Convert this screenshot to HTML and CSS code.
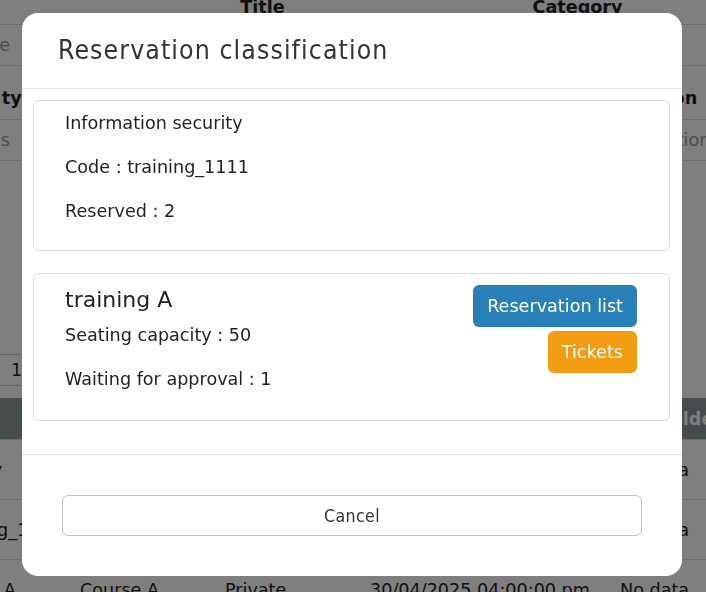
FILE: index.html
```html
<!DOCTYPE html>
<html>

<head>
  <link rel="stylesheet" href="styles.css">
</head>

<body>

  <div class="page">
    <div class="filters">
      <div class="frow head">
        <span></span>
        <span class="center">Title</span>
        <span class="center wide">Category</span>
      </div>
      <div class="frow inputs">
        <span class="ph">Title</span>
        <span></span>
        <span></span>
      </div>
      <div class="frow head tall">
        <span>Course type</span>
        <span></span>
        <span class="far">Classification</span>
      </div>
      <div class="frow inputs">
        <span class="ph">Types</span>
        <span></span>
        <span class="ph far2">Classification</span>
      </div>
    </div>

    <div class="pager">
      <div class="select">10</div>
    </div>

    <div class="grid">
      <div class="grow ghead">
        <span>Course</span><span>Title</span><span>Type</span><span>Date</span><span>Placeholder</span>
      </div>
      <div class="grow">
        <span>Security</span><span></span><span></span><span></span><span>No data</span>
      </div>
      <div class="grow">
        <span class="shift">training_1111</span><span></span><span></span><span></span><span>No data</span>
      </div>
      <div class="grow">
        <span>training A</span><span>Course A</span><span>Private</span><span>30/04/2025 04:00:00 pm</span><span>No data</span>
      </div>
    </div>
  </div>

  <div class="overlay">
    <div class="dialog">
      <div class="dialog-header">
        <h3 class="dialog-title">Reservation classification</h3>
      </div>

      <div class="dialog-body">
        <div class="card info">
          <p>Information security</p>
          <p>Code : training_1111</p>
          <p>Reserved : 2</p>
        </div>

        <div class="card course">
          <div class="course-text">
            <h4>training A</h4>
            <p>Seating capacity : 50</p>
            <p>Waiting for approval : 1</p>
          </div>
          <div class="course-actions">
            <button class="btn btn-blue" type="button">Reservation list</button>
            <button class="btn btn-orange" type="button">Tickets</button>
          </div>
        </div>
      </div>

      <div class="dialog-footer">
        <button class="btn-cancel" type="button">Cancel</button>
      </div>
    </div>
  </div>

</body>

</html>
```

FILE: styles.css
```css
html {
  height: 100%;
}

body {
  margin: 0;
  height: 100%;
  overflow: hidden;
  background: #ffffff;
  color: #222222;
  font-family: "DejaVu Sans", Verdana, sans-serif;
  font-size: 17.6px;
}

/* page behind the dialog */
.page {
  margin-top: -10px;
}

.frow {
  display: grid;
  grid-template-columns: 200px 285px 400px;
  margin-left: -80px;
  border-bottom: 1px solid #dddddd;
  align-items: center;
}

.frow span {
  padding: 0 10px;
  white-space: nowrap;
}

.frow.head {
  height: 34px;
  font-weight: bold;
}

.frow.head.tall {
  height: 54px;
  padding-top: 10px;
  box-sizing: border-box;
}

.frow.inputs {
  height: 40px;
}

.frow.tall span:first-child {
  padding-left: 7px;
}

.frow .ph {
  color: #999999;
}

.frow.inputs span:first-child {
  text-align: right;
  padding-right: 110px;
}

.frow .center {
  text-align: center;
}

.frow .center.wide {
  padding-right: 65px;
}

.frow .far {
  padding-left: 160px;
}

.frow .far2 {
  padding-left: 189px;
}

.pager {
  padding: 193px 0 12px 0;
}

.select {
  width: 40px;
  height: 30px;
  margin-left: -10px;
  padding-left: 20px;
  line-height: 30px;
  border: 1px solid #cccccc;
  border-radius: 4px;
}

.grid {
  margin-left: -80px;
}

.grow {
  display: grid;
  grid-template-columns: 150px 145px 145px 245px 200px;
  height: 60px;
  align-items: center;
  border-bottom: 1px solid #dddddd;
  box-sizing: border-box;
  white-space: nowrap;
}

.grow span {
  padding-left: 10px;
}

.grow span:last-child {
  padding-left: 15px;
}

.grow .shift {
  padding-left: 20px;
}

.grow.ghead {
  height: 42px;
  background: #8f9b9b;
  color: #ffffff;
  font-weight: bold;
}

.grow.ghead span:last-child {
  padding-left: 0;
}

/* dialog */
.overlay {
  position: fixed;
  top: 0;
  left: 0;
  right: 0;
  bottom: 0;
  display: flex;
  align-items: flex-start;
  padding: 13px 0 0 22px;
  background: rgba(0, 0, 0, .5);
}

.dialog {
  width: 660px;
  background: #ffffff;
  border-radius: 16px;
  overflow: hidden;
}

.dialog-header {
  height: 75px;
  display: flex;
  align-items: center;
  padding: 0 36px;
  border-bottom: 1px solid #e5e5e5;
}

.dialog-title {
  margin: 0 0 2px 0;
  font-family: "DejaVu Sans Condensed", "DejaVu Sans", sans-serif;
  font-stretch: condensed;
  font-weight: normal;
  font-size: 26.4px;
  letter-spacing: 1.1px;
  color: #333333;
}

.dialog-body {
  padding: 11px 12px 33px 11px;
  border-bottom: 1px solid #e5e5e5;
}

.card {
  border: 1px solid #dddddd;
  border-radius: 6px;
  box-sizing: border-box;
}

.card p {
  margin: 0;
  line-height: 44px;
}

.card.info {
  height: 151px;
  padding: 0 31px;
}

.card.course {
  margin-top: 22px;
  height: 148px;
  padding: 13px 32px 0 31px;
  display: flex;
  justify-content: space-between;
}

.course-text h4 {
  margin: 0;
  font-weight: normal;
  font-size: 22px;
  line-height: 26px;
}

.course-actions {
  display: flex;
  flex-direction: column;
  align-items: flex-end;
  gap: 4px;
  margin-top: -2px;
}

.btn {
  height: 42px;
  padding: 0 14px;
  border: none;
  border-radius: 6px;
  color: #ffffff;
  font-family: "DejaVu Sans", Verdana, sans-serif;
  font-size: 17.6px;
}

.btn-blue {
  background: #2980b9;
}

.btn-orange {
  background: #f39c12;
}

.dialog-footer {
  padding: 40px;
}

.btn-cancel {
  display: block;
  width: 100%;
  height: 41px;
  background: #ffffff;
  border: 1px solid #c4c4c4;
  border-radius: 6px;
  color: #333333;
  font-family: "DejaVu Sans Condensed", "DejaVu Sans", sans-serif;
  font-stretch: condensed;
  font-size: 17.6px;
  letter-spacing: .4px;
}
```
